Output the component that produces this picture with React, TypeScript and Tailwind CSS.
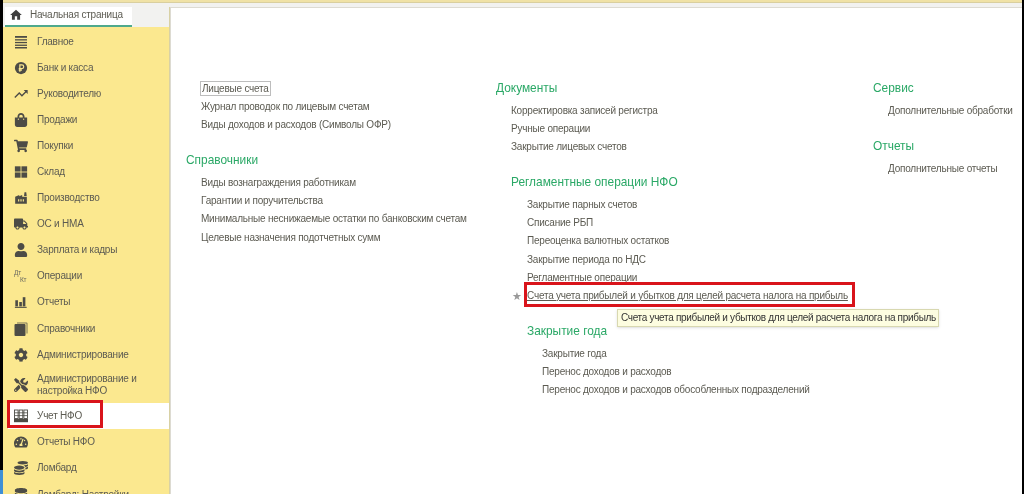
import { FaCog, FaShoppingBag, FaShoppingCart, FaTools, FaTruck, FaUser, FaDatabase, FaCoins, FaTachometerAlt } from 'react-icons/fa'
import { MdFactory, MdHome, MdTrendingUp } from 'react-icons/md'
import type { ReactNode } from 'react'

function MenuIcon() {
  return (
    <svg viewBox="0 0 16 16" className="w-4 h-4" fill="currentColor">
      <rect x="2" y="2" width="12" height="1.8" />
      <rect x="2" y="5.2" width="12" height="1.3" />
      <rect x="2" y="7.9" width="12" height="1.3" />
      <rect x="2" y="10.6" width="12" height="1.3" />
      <rect x="2" y="13" width="12" height="1.5" />
    </svg>
  )
}

function BankIcon() {
  return (
    <svg viewBox="0 0 16 16" className="w-[14px] h-[14px]">
      <circle cx="8" cy="8" r="7" fill="currentColor" />
      <path d="M6.7 12.2V4.4h2.3a2 2 0 0 1 0 4.2H5.4M5.4 10.4h3.6" fill="none" stroke="#fbe88f" strokeWidth="1.4" />
    </svg>
  )
}

function WarehouseIcon() {
  return (
    <svg viewBox="0 0 16 16" className="w-[14px] h-[14px]" fill="currentColor">
      <rect x="1" y="1.5" width="6.5" height="6" />
      <rect x="8.5" y="1.5" width="6.5" height="6" />
      <rect x="1" y="8.5" width="6.5" height="6" />
      <rect x="8.5" y="8.5" width="6.5" height="6" />
    </svg>
  )
}

function BooksIcon() {
  return (
    <svg viewBox="0 0 16 16" className="w-4 h-4" fill="currentColor">
      <path d="M4 1.5h9.5a1 1 0 0 1 1 1v10h-1v-10H4z" opacity="0.75" />
      <rect x="1.5" y="3" width="11" height="12" rx="1" />
    </svg>
  )
}

function BarsIcon() {
  return (
    <svg viewBox="0 0 16 16" className="w-[14px] h-[14px]" fill="currentColor">
      <rect x="1.5" y="6" width="3" height="7" />
      <rect x="6" y="8" width="3" height="5" />
      <rect x="10" y="2.5" width="3" height="10.5" />
      <rect x="1" y="13.5" width="13.5" height="1.2" />
    </svg>
  )
}

function LedgerIcon() {
  return (
    <svg viewBox="0 0 16 16" className="w-4 h-4" fill="none" stroke="currentColor">
      <rect x="1.5" y="2" width="3.6" height="8.5" strokeWidth="0.9" />
      <rect x="6.2" y="2" width="3.6" height="8.5" strokeWidth="0.9" />
      <rect x="10.9" y="2" width="3.6" height="8.5" strokeWidth="0.9" />
      <path d="M1.5 4.8h13M1.5 7.6h13" strokeWidth="0.8" />
      <rect x="1" y="11" width="14" height="3.2" fill="currentColor" strokeWidth="0" />
    </svg>
  )
}

function OperationsIcon() {
  return (
    <span className="flex flex-col w-[14px] h-[14px] text-[6.5px] leading-[7px] text-[#6a6960]">
      <span>Дт</span>
      <span className="pl-1.5">Кт</span>
    </span>
  )
}

type NavItem = { label: ReactNode; icon: ReactNode; active?: boolean; tall?: boolean }

const ic = 'w-[14px] h-[14px]'

const navItems: NavItem[] = [
  { label: 'Главное', icon: <MenuIcon /> },
  { label: 'Банк и касса', icon: <BankIcon /> },
  { label: 'Руководителю', icon: <MdTrendingUp className="w-4 h-4" /> },
  { label: 'Продажи', icon: <FaShoppingBag className={ic} /> },
  { label: 'Покупки', icon: <FaShoppingCart className={ic} /> },
  { label: 'Склад', icon: <WarehouseIcon /> },
  { label: 'Производство', icon: <MdFactory className={ic} /> },
  { label: 'ОС и НМА', icon: <FaTruck className={ic} /> },
  { label: 'Зарплата и кадры', icon: <FaUser className={ic} /> },
  { label: 'Операции', icon: <OperationsIcon /> },
  { label: 'Отчеты', icon: <BarsIcon /> },
  { label: 'Справочники', icon: <BooksIcon /> },
  { label: 'Администрирование', icon: <FaCog className={ic} /> },
  { label: <>Администрирование и<br />настройка НФО</>, icon: <FaTools className={ic} />, tall: true },
  { label: 'Учет НФО', icon: <LedgerIcon />, active: true },
  { label: 'Отчеты НФО', icon: <FaTachometerAlt className={ic} /> },
  { label: 'Ломбард', icon: <FaCoins className={ic} /> },
  { label: 'Ломбард: Настройки', icon: <FaDatabase className={ic} /> },
]

function SideRow({ item }: { item: NavItem }) {
  return (
    <div
      className={`relative flex items-center gap-[8px] shrink-0 text-[10px] tracking-[-0.22px] leading-[12px] text-[#5c5b52] ${
        item.tall ? 'h-[35.5px]' : 'h-[26.1px]'
      } ${item.active ? 'bg-white ml-[5px] pl-[5px]' : 'pl-[10px]'}`}
    >
      <span className="w-4 flex justify-center text-[#4d4c46]">{item.icon}</span>
      <span className="whitespace-nowrap">{item.label}</span>
      {item.active && <div className="absolute left-[-1px] top-[-3px] w-[96px] h-[28px] border-[3px] border-[#d9141b]" />}
    </div>
  )
}

function Heading({ children, className = '' }: { children: ReactNode; className?: string }) {
  return <div className={`text-[11.9px] tracking-normal leading-[16px] pb-[2px] whitespace-nowrap text-[#2aa866] ${className}`}>{children}</div>
}

function Links({ items, className = '' }: { items: string[]; className?: string }) {
  return (
    <div className={`flex flex-col ${className}`}>
      {items.map((t) => (
        <div key={t} className="h-[18.1px] leading-[18px] whitespace-nowrap">{t}</div>
      ))}
    </div>
  )
}

export default function App() {
  return (
    <div className="w-[1024px] h-[494px] overflow-hidden bg-black flex font-['Liberation_Sans',Arial,sans-serif] blur-[0.4px]">
      <div className="w-[3px] h-full flex flex-col justify-end shrink-0">
        <div className="h-[24px] bg-[#3f8fd6]" />
      </div>
      <div className="flex-1 flex flex-col mr-[2px] min-w-0">
        <div className="h-[3px] bg-[#f0e2a6] border-b border-[#d9cf9f] shrink-0" />
        <div className="h-[4px] bg-[#f2f2f0] shrink-0" />
        <div className="flex flex-1 min-h-0">
          {/* Sidebar */}
          <div className="w-[167px] shrink-0 flex flex-col overflow-hidden bg-[#fbe88f] border-r border-[#d8d1a5]">
            <div className="h-[20px] shrink-0 flex bg-[#f2f2f0]">
              <div className="w-[127px] ml-[2px] h-[20px] bg-white border-b-2 border-[#4fa98c] flex items-center gap-[7px] pl-[4px] pb-[3px] text-[10px] tracking-[-0.22px] text-[#5c5b52] whitespace-nowrap">
                <MdHome className="w-[14px] h-[14px] text-[#3f3f3f]" />
                <span>Начальная страница</span>
              </div>
            </div>
            <div className="flex flex-col pt-[1.5px]">
              {navItems.map((item, i) => (
                <SideRow key={i} item={item} />
              ))}
            </div>
          </div>

          {/* Content */}
          <div className="relative flex-1 min-w-0 bg-white border-t border-l border-[#dddbd2] flex text-[10px] tracking-[-0.22px] text-[#5c5b52] pt-[72px] pl-[15px]">
            <div className="w-[310px] shrink-0">
              <div className="pl-[15px]">
                <div className="h-[18.1px] leading-[18px]">
                  <span className="border border-[#bdbdbd] px-px py-px -ml-px">Лицевые счета</span>
                </div>
                <Links items={['Журнал проводок по лицевым счетам', 'Виды доходов и расходов (Символы ОФР)']} />
              </div>
              <Heading className="mt-[18px]">Справочники</Heading>
              <Links
                className="pl-[15px] mt-[4px]"
                items={[
                  'Виды вознаграждения работникам',
                  'Гарантии и поручительства',
                  'Минимальные неснижаемые остатки по банковским счетам',
                  'Целевые назначения подотчетных сумм',
                ]}
              />
            </div>

            <div className="w-[377px] shrink-0">
              <Heading>Документы</Heading>
              <Links
                className="pl-[15px] mt-[4px]"
                items={['Корректировка записей регистра', 'Ручные операции', 'Закрытие лицевых счетов']}
              />
              <div className="pl-[15px] mt-[18px]">
                <Heading>Регламентные операции НФО</Heading>
                <div className="pl-[16px] mt-[4px]">
                  <Links
                    items={['Закрытие парных счетов', 'Списание РБП', 'Переоценка валютных остатков', 'Закрытие периода по НДС', 'Регламентные операции']}
                  />
                  <div className="relative h-[18.1px] leading-[18px] whitespace-nowrap underline">
                    <span className="absolute left-[-15px] top-0 no-underline text-[#999] text-[11px]">★</span>
                    Счета учета прибылей и убытков для целей расчета налога на прибыль
                    <div className="absolute left-[-3px] top-[-5px] w-[331px] h-[25px] border-[3px] border-[#d9141b]" />
                    <div className="absolute left-[90px] top-[22px] w-[322px] h-[18px] leading-[15px] pl-[3px] text-[10px] tracking-[-0.31px] text-[#333] bg-[#fdfde0] border border-[#d8d8b0] shadow-sm no-underline">
                      Счета учета прибылей и убытков для целей расчета налога на прибыль
                    </div>
                  </div>
                  <Heading className="mt-[18px]">Закрытие года</Heading>
                  <Links
                    className="pl-[15px] mt-[4px]"
                    items={['Закрытие года', 'Перенос доходов и расходов', 'Перенос доходов и расходов обособленных подразделений']}
                  />
                </div>
              </div>
            </div>

            <div className="flex-1 min-w-0">
              <Heading>Сервис</Heading>
              <Links className="pl-[15px] mt-[4px]" items={['Дополнительные обработки']} />
              <Heading className="mt-[18px]">Отчеты</Heading>
              <Links className="pl-[15px] mt-[4px]" items={['Дополнительные отчеты']} />
            </div>
          </div>
        </div>
      </div>
    </div>
  )
}
